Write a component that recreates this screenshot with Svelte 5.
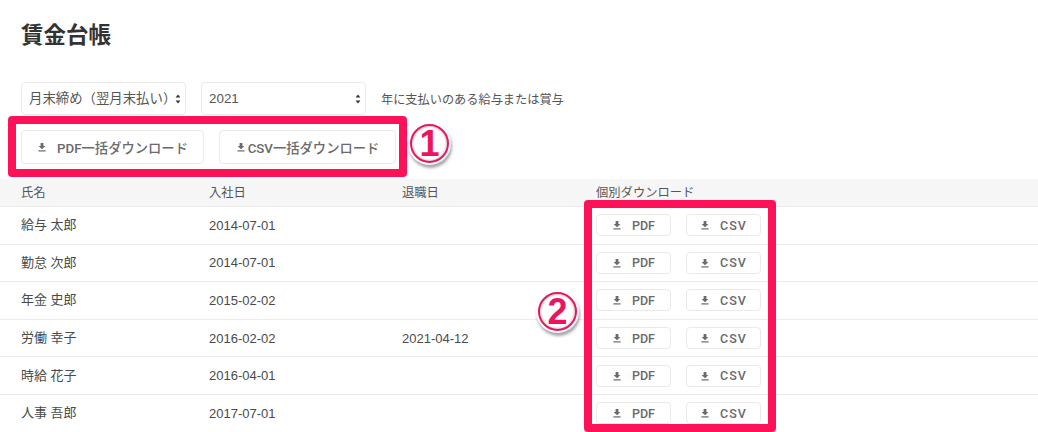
<script>
	const rows = [
		{ name: '給与 太郎', joined: '2014-07-01', left: '' },
		{ name: '勤怠 次郎', joined: '2014-07-01', left: '' },
		{ name: '年金 史郎', joined: '2015-02-02', left: '' },
		{ name: '労働 幸子', joined: '2016-02-02', left: '2021-04-12' },
		{ name: '時給 花子', joined: '2016-04-01', left: '' },
		{ name: '人事 吾郎', joined: '2017-07-01', left: '' }
	];
</script>

{#snippet icon()}
	<svg class="icon" viewBox="0 0 10 10" width="10" height="10" aria-hidden="true">
		<path d="M3.6 1h2.8v3h2L5 7.2 1.6 4h2z" fill="currentColor" />
		<rect x="1.4" y="8.3" width="7.2" height="1.2" fill="currentColor" />
	</svg>
{/snippet}

{#snippet arrows()}
	<svg class="arrows" viewBox="0 0 6 10" width="6" height="10" aria-hidden="true">
		<path d="M3 0.5 5.4 3.6H.6zM3 9.5.6 6.4h4.8z" fill="#333" />
	</svg>
{/snippet}

<main class="page">
	<h1>賃金台帳</h1>

	<div class="filters">
		<div class="select">
			<select><option>月末締め（翌月末払い）</option></select>
			{@render arrows()}
		</div>
		<div class="select">
			<select><option>2021</option></select>
			{@render arrows()}
		</div>
		<span class="note">年に支払いのある給与または賞与</span>
	</div>

	<div class="bulk">
		<button class="btn wide pdf">{@render icon()}<span>PDF一括ダウンロード</span></button>
		<button class="btn wide csv">{@render icon()}<span>CSV一括ダウンロード</span></button>
	</div>

	<div class="table">
		<div class="row head">
			<div>氏名</div>
			<div>入社日</div>
			<div>退職日</div>
			<div>個別ダウンロード</div>
		</div>
		{#each rows as row}
			<div class="row">
				<div class="name">{row.name}</div>
				<div>{row.joined}</div>
				<div>{row.left}</div>
				<div class="actions">
					<button class="btn small">{@render icon()}<span>PDF</span></button>
					<button class="btn small">{@render icon()}<span class="spaced">CSV</span></button>
				</div>
			</div>
		{/each}
	</div>

	<div class="mark box-one"></div>
	<div class="mark box-two"></div>
	<div class="badge badge-one">1</div>
	<div class="badge badge-two">2</div>
</main>

<style>
	:global(body) {
		margin: 0;
		background: #fff;
		overflow: hidden;
	}

	.page {
		position: relative;
		width: 1038px;
		height: 432px;
		overflow: hidden;
		color: #4a4a4a;
		font-family: 'Liberation Sans', 'Noto Sans CJK JP', sans-serif;
		font-size: 13px;
	}

	h1 {
		margin: 0;
		padding: 23px 0 0 21px;
		height: 61px;
		box-sizing: border-box;
		font-size: 22.5px;
		line-height: 26px;
		font-weight: 700;
		color: #333;
	}

	.filters {
		display: flex;
		align-items: center;
		height: 33px;
		padding-left: 21px;
		margin-top: 21px;
	}

	.select {
		position: relative;
		width: 165px;
		height: 33px;
		margin-right: 15px;
	}

	select {
		appearance: none;
		width: 100%;
		height: 100%;
		padding: 0 0 0 7px;
		background: #fff;
		border: 1px solid #eceaea;
		border-radius: 4px;
		color: #555;
		font: inherit;
		font-size: 13.4px;
	}

	.arrows {
		position: absolute;
		right: 5px;
		top: 12px;
	}

	.note {
		color: #555;
		font-size: 12.2px;
	}

	.bulk {
		display: flex;
		gap: 15px;
		padding: 15px 0 0 21px;
	}

	.btn {
		display: flex;
		align-items: center;
		justify-content: center;
		box-sizing: border-box;
		padding: 0;
		background: #fff;
		border: 1px solid #ebe9e9;
		border-radius: 4px;
		color: #6a6a6a;
		font-family: Roboto, 'Noto Sans CJK JP', sans-serif;
		font-weight: 500;
	}

	.btn.wide {
		height: 34px;
		font-size: 13.3px;
	}

	.btn.pdf {
		width: 183px;
		gap: 10px;
	}

	.btn.csv {
		width: 177px;
		gap: 2px;
	}

	.btn.small {
		width: 75px;
		height: 22px;
		gap: 10px;
		font-size: 12.5px;
	}

	.spaced {
		letter-spacing: 1px;
	}

	.table {
		margin-top: 15px;
	}

	.row {
		display: grid;
		grid-template-columns: 188px 193px 194px 1fr;
		align-items: center;
		height: 37.6px;
		box-sizing: border-box;
		padding-left: 21px;
		border-bottom: 1px solid #ecebeb;
		color: #4a4a4a;
	}

	.row.head {
		height: 28px;
		background: #f7f6f6;
		line-height: 18px;
		font-size: 12.3px;
		color: #555;
	}

	.name {
		padding-bottom: 3px;
	}

	.actions {
		display: flex;
		gap: 15px;
	}

	.mark {
		position: absolute;
		box-sizing: border-box;
		border: 8px solid #fd1259;
		border-radius: 4px;
	}

	.box-one {
		left: 8px;
		top: 116px;
		width: 399px;
		height: 61px;
	}

	.box-two {
		left: 584px;
		top: 200px;
		width: 192px;
		height: 232px;
	}

	.badge {
		position: absolute;
		box-sizing: border-box;
		width: 39px;
		height: 39px;
		display: flex;
		align-items: center;
		justify-content: center;
		background: #fff;
		border: 2.5px solid #ec1460;
		border-radius: 50%;
		box-shadow: 0 0 0 2px #fff, 1px 3px 3px 2px rgba(0, 0, 0, 0.35), inset 0 0 2px 1px #ccc;
		color: #ec1460;
		font-size: 36px;
		font-weight: 700;
		line-height: 1;
	}

	.badge-one {
		left: 410px;
		top: 124px;
	}

	.badge-two {
		left: 538px;
		top: 292px;
	}
</style>
